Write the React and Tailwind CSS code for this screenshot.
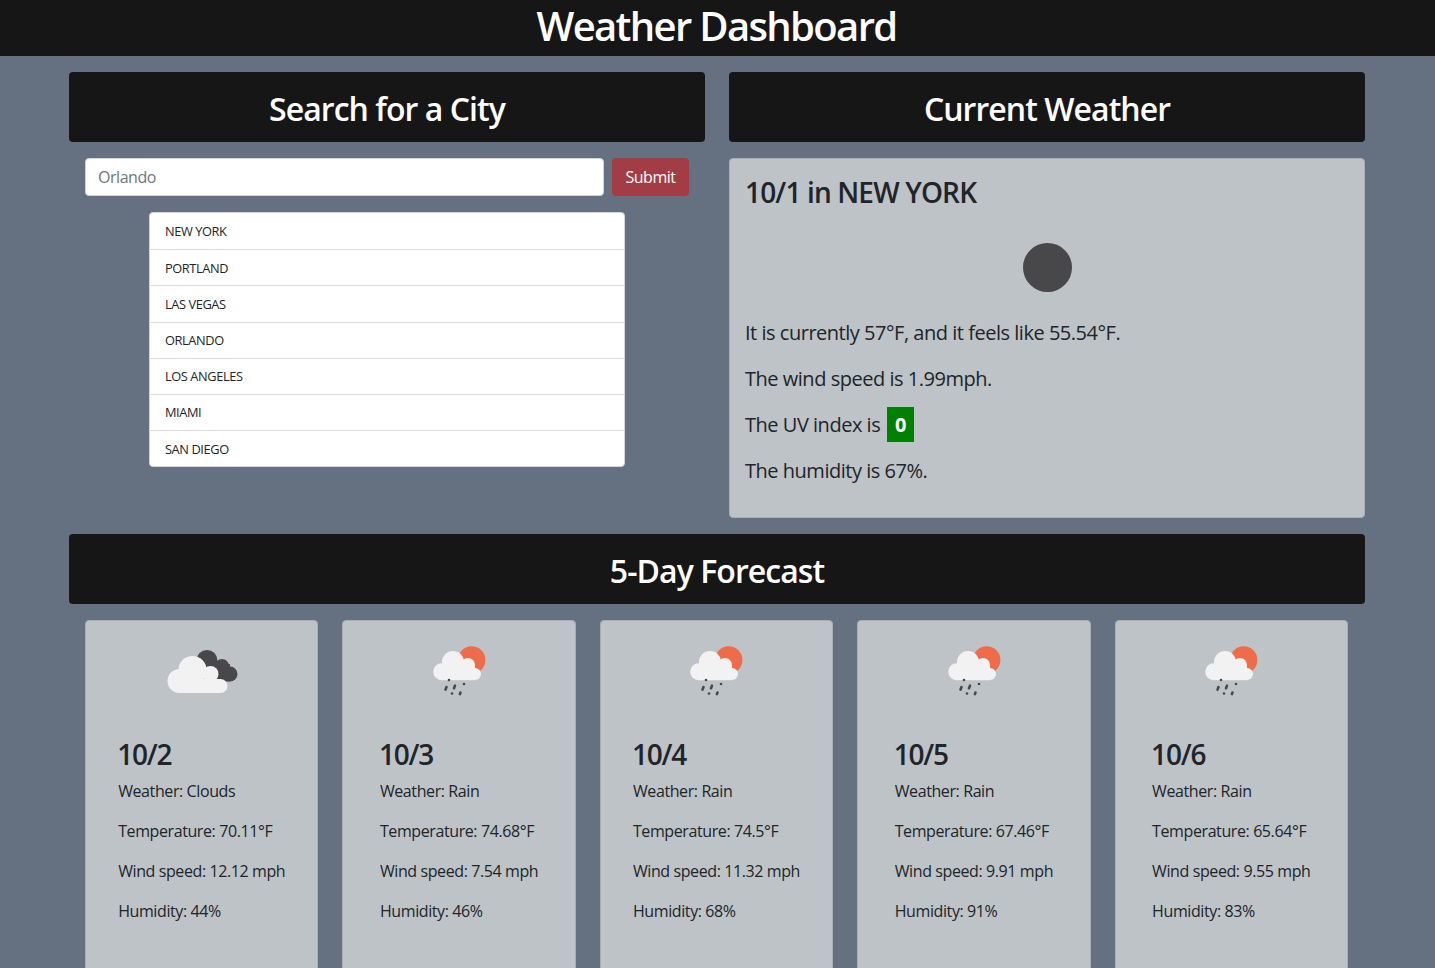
const font = { fontFamily: '"Open Sans", "Noto Sans", sans-serif' }

const cities = ['NEW YORK', 'PORTLAND', 'LAS VEGAS', 'ORLANDO', 'LOS ANGELES', 'MIAMI', 'SAN DIEGO']

const forecast = [
  { date: '10/2', weather: 'Clouds', temp: '70.11', wind: '12.12', humidity: '44' },
  { date: '10/3', weather: 'Rain', temp: '74.68', wind: '7.54', humidity: '46' },
  { date: '10/4', weather: 'Rain', temp: '74.5', wind: '11.32', humidity: '68' },
  { date: '10/5', weather: 'Rain', temp: '67.46', wind: '9.91', humidity: '91' },
  { date: '10/6', weather: 'Rain', temp: '65.64', wind: '9.55', humidity: '83' },
]

function CloudsIcon() {
  return (
    <svg viewBox="0 0 100 100" className="block w-[100px] h-[100px] mx-auto">
      <g fill="#48484b">
        <circle cx="55" cy="24.5" r="10.5" />
        <circle cx="70" cy="30" r="7" />
        <circle cx="78" cy="38" r="7.5" />
        <rect x="52" y="28" width="26" height="17.5" />
      </g>
      <g fill="#f2f2f2">
        <circle cx="40.5" cy="34" r="14" />
        <circle cx="58.5" cy="38" r="8" />
        <circle cx="27.5" cy="45" r="12" />
        <circle cx="68.5" cy="50" r="7" />
        <rect x="27.5" y="43" width="41" height="14" />
      </g>
    </svg>
  )
}

function RainIcon() {
  return (
    <svg viewBox="0 0 100 100" className="block w-[100px] h-[100px] mx-auto">
      <circle cx="62.7" cy="24" r="13.7" fill="#ef6c4a" />
      <g fill="#f2f2f2">
        <circle cx="44" cy="26" r="11" />
        <circle cx="59" cy="29" r="7" />
        <circle cx="32.7" cy="35.7" r="8.5" />
        <circle cx="66" cy="38" r="6" />
        <rect x="32.7" y="30" width="33.3" height="14.2" />
      </g>
      <g stroke="#48484b" strokeWidth="2.6" strokeLinecap="round" fill="none">
        <path d="M40 44h.01" />
        <path d="M37.5 51l-1 2.6" />
        <path d="M46 49.6l-1 2.6" />
        <path d="M55 48h.01" />
        <path d="M43 57.5h.01" />
        <path d="M51.5 56.5l-.6 1.6" />
      </g>
    </svg>
  )
}

function SectionTitle({ children }) {
  return (
    <div className="h-[70px] pt-[3px] flex items-center justify-center rounded bg-[#161616] text-white text-[32px] leading-[40px] font-semibold tracking-[-0.95px]">
      {children}
    </div>
  )
}

function ForecastCard({ day }) {
  return (
    <div className="bg-[#bdc3c6] border border-[#a9afb3] rounded h-[400px] pt-[15px]">
      {day.weather === 'Clouds' ? <CloudsIcon /> : <RainIcon />}
      <div className="w-fit mx-auto mt-0.5 text-[#212529] text-base leading-6 tracking-[-0.4px]">
        <h3 className="text-[28px] leading-[34px] font-semibold -mt-px -ml-px mb-2 tracking-[-1.2px]">{day.date}</h3>
        <p className="mb-4">Weather: {day.weather}</p>
        <p className="mb-4">Temperature: {day.temp}°F</p>
        <p className="mb-4">Wind speed: {day.wind} mph</p>
        <p>Humidity: {day.humidity}%</p>
      </div>
    </div>
  )
}

export default function App() {
  return (
    <div style={font} className="h-[968px] overflow-hidden bg-[#657180]">
      <header className="h-14 pb-1 pr-0.5 flex items-center justify-center bg-[#161616] text-white text-[40px] leading-[48px] font-semibold tracking-[-1.65px]">
        Weather Dashboard
      </header>

      <main className="w-[1296px] ml-[69px] pt-4">
        <div className="grid grid-cols-2 gap-6">
          <section>
            <SectionTitle>Search for a City</SectionTitle>
            <form className="flex gap-2 mt-4 px-4">
              <input
                placeholder="Orlando"
                className="flex-1 min-w-0 h-[38px] px-3 rounded bg-white border border-[#ced4da] text-base tracking-[-0.45px] placeholder:text-[#6c757d]"
              />
              <button type="button" className="w-[77px] h-[38px] rounded bg-[#a33d45] text-white text-base tracking-[-0.45px]">
                Submit
              </button>
            </form>
            <ul className="w-[476px] mx-auto mt-4 rounded bg-white border border-[#d3d6da] text-[#212529] text-[12.8px] tracking-[-0.4px]">
              {cities.map((city, i) => (
                <li key={city} className={`h-[36.2px] pt-px flex items-center pl-[15px] pr-4 ${i > 0 ? 'border-t border-[#d9dcdf]' : ''}`}>
                  {city}
                </li>
              ))}
            </ul>
          </section>

          <section>
            <SectionTitle>Current Weather</SectionTitle>
            <div className="h-[360px] mt-4 py-4 pl-[15px] pr-[14px] rounded bg-[#bdc3c6] border border-[#a9afb3] text-[#212529]">
              <h2 className="text-[28px] leading-[34px] font-semibold tracking-[-0.85px]">10/1 in NEW YORK</h2>
              <div className="h-[49px] w-[49px] mx-auto mt-[34px] mb-[26px] rounded-full bg-[#48484b]" />
              <div className="text-xl leading-[30px] tracking-[-0.48px]">
                <p className="mb-4">It is currently 57°F, and it feels like 55.54°F.</p>
                <p className="mb-4">The wind speed is 1.99mph.</p>
                <p className="mb-4">
                  The UV index is <span className="px-2 py-1 ml-0.5 bg-[#008000] text-white font-bold">0</span>
                </p>
                <p>The humidity is 67%.</p>
              </div>
            </div>
          </section>
        </div>

        <section className="mt-4">
          <SectionTitle>5-Day Forecast</SectionTitle>
          <div className="grid grid-cols-5 gap-6 mt-4 pl-4 pr-[17px]">
            {forecast.map((day) => (
              <ForecastCard key={day.date} day={day} />
            ))}
          </div>
        </section>
      </main>
    </div>
  )
}
